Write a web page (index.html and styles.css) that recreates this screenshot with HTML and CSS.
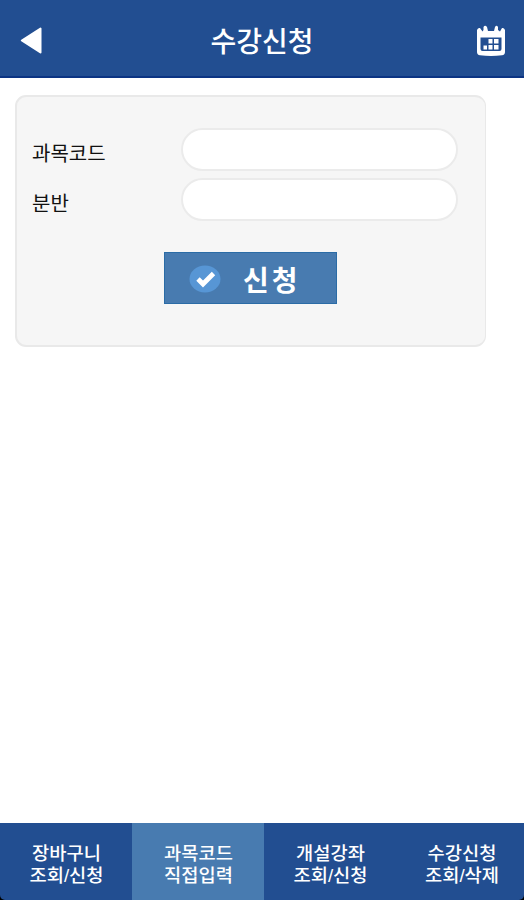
FILE: index.html
```html
<!DOCTYPE html>
<html lang="ko">
<head>
  <meta charset="UTF-8" />
  <meta name="viewport" content="width=device-width, initial-scale=1.0" />
  <title>수강신청</title>
  <link rel="stylesheet" href="styles.css">
</head>
<body>

  <header class="header">
    <button class="icon-btn" type="button" aria-label="뒤로">
      <svg width="22" height="28" viewBox="0 0 22 28">
        <path d="M1.8 13.5 L20.5 1.5 V25.5 Z" fill="#fff" stroke="#fff" stroke-width="2" stroke-linejoin="round" />
      </svg>
    </button>
    <h1>수강신청</h1>
    <button class="icon-btn" type="button" aria-label="시간표">
      <svg width="30" height="32" viewBox="0 0 30 32">
        <path fill="#fff" fill-rule="evenodd" d="M1 5 Q2 2.5 4 3 L6.5 6.5 L7.5 5 V2 Q9 -0.5 11 2 L12 6 H18 L19 2 Q20.5 -0.5 22 2 V5 L24 6.5 L26 3 Q28 2.5 29 5 V27 Q29 30 26 30.3 Q15 31.5 4 30.3 Q1 30 1 27 Z M4.5 12.5 V24 Q4.5 26 6.5 26 H23.5 Q25.5 26 25.5 24 V12.5 Z" />
        <path fill="#fff" d="M12.5 14h4v4.5h-4z M18 14h4.5v4.5h-4.5z M7.5 20.5h3.5v4h-3.5z M12.5 20h4v4.5h-4z M18 20h4.5v4.5h-4.5z" />
      </svg>
    </button>
  </header>

  <main>
    <form class="card">
      <div class="row">
        <label for="code">과목코드</label>
        <input type="text" id="code" />
      </div>
      <div class="row">
        <label for="section">분반</label>
        <input type="text" id="section" />
      </div>
      <button class="submit-btn" type="button">
        <svg width="32" height="28" viewBox="0 0 32 28">
          <ellipse cx="16" cy="14" rx="15.5" ry="13.5" fill="#5796d5" />
          <path d="M9 14 L14 19 L24.5 8.5" fill="none" stroke="#fff" stroke-width="4.8" />
        </svg>
        <span>신청</span>
      </button>
    </form>
  </main>

  <nav class="tabs">
    <a>장바구니<br>조회/신청</a>
    <a class="active">과목코드<br>직접입력</a>
    <a>개설강좌<br>조회/신청</a>
    <a>수강신청<br>조회/삭제</a>
  </nav>

</body>
</html>
```

FILE: styles.css
```css
* {
  box-sizing: border-box;
}

body {
  margin: 0;
  height: 100vh;
  display: flex;
  flex-direction: column;
  background: #000;
  font-family: "Noto Sans CJK KR", sans-serif;
  color: #111;
}

button {
  font-family: inherit;
  border: none;
  padding: 0;
  cursor: pointer;
}

.header {
  height: 78px;
  padding: 5px 18px 0 20px;
  display: flex;
  align-items: center;
  justify-content: space-between;
  background: #224e91;
  border-bottom: 2px solid #0c3483;
}

.header h1 {
  margin: 0;
  padding: 0 0 1px 6px;
  font-size: 28px;
  line-height: 40px;
  font-weight: 500;
  color: #fff;
}

.icon-btn {
  display: flex;
  background: none;
}

main {
  flex: 1;
  padding: 17px 38px 0 15px;
  background: #fff;
}

.card {
  height: 252px;
  padding: 31px 27px 0 15px;
  display: flex;
  flex-direction: column;
  gap: 6px;
  background: #f6f6f6;
  border: 2px solid #e9e9e9;
  border-right-width: 1px;
  border-radius: 11px;
}

.row {
  display: flex;
  align-items: center;
  justify-content: space-between;
}

.row label {
  padding-top: 6px;
  font-size: 20px;
  line-height: 28px;
}

.row input {
  width: 277px;
  height: 43px;
  margin-bottom: 1px;
  padding: 0 20px;
  font-size: 20px;
  background: #fff;
  border: 2px solid #ebebeb;
  border-radius: 22px;
  outline: none;
}

.submit-btn {
  width: 173px;
  height: 52px;
  margin: 24px 0 0 132px;
  padding: 1px 0 0 24px;
  display: flex;
  align-items: center;
  gap: 22px;
  background: #487bb0;
  border: 1px solid #2b6ca6;
  color: #fff;
  font-size: 28px;
  line-height: 40px;
  font-weight: 700;
  letter-spacing: 3px;
}

.tabs {
  height: 77px;
  display: grid;
  grid-template-columns: 132px 132px 132px 1fr;
  background: #224e91;
  border-radius: 0 0 5px 5px;
  overflow: hidden;
}

.tabs a {
  padding: 20px 0 0 1px;
  font-family: "Liberation Sans", "Noto Sans CJK KR", sans-serif;
  font-size: 18.7px;
  line-height: 22px;
  font-weight: 500;
  text-align: center;
  color: #fff;
}

.tabs a:last-child {
  padding-left: 4px;
}

.tabs .active {
  background: #487bb0;
}
```
